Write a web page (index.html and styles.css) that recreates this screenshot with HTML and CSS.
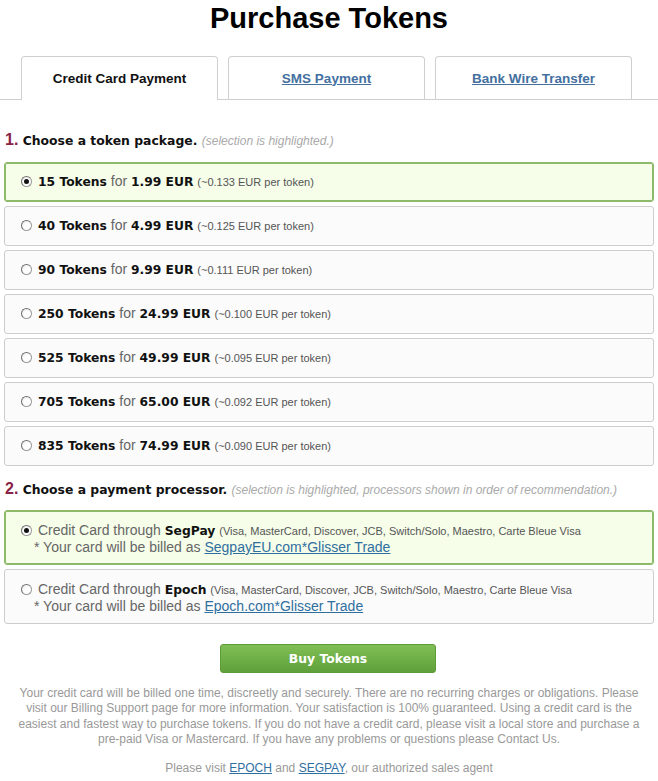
FILE: index.html
```html
<!DOCTYPE html>
<html>
<head>
<meta charset="utf-8">
<title>Purchase Tokens</title>
<link rel="stylesheet" href="styles.css">
</head>
<body>
<h1 class="title">Purchase Tokens</h1>
<div class="tabs">
  <div class="tab active">Credit Card Payment</div>
  <div class="tab"><a href="#">SMS Payment</a></div>
  <div class="tab"><a href="#">Bank Wire Transfer</a></div>
</div>

<div class="content">
  <h2 class="step"><span class="num">1.</span> Choose a token package. <span class="hint">(selection is highlighted.)</span></h2>
  <div class="packages">
    <div class="row selected"><span class="radio on"></span><b>15 Tokens</b> <span class="for">for</span> <b>1.99 EUR</b> <span class="per">(~0.133 EUR per token)</span></div>
    <div class="row"><span class="radio"></span><b>40 Tokens</b> <span class="for">for</span> <b>4.99 EUR</b> <span class="per">(~0.125 EUR per token)</span></div>
    <div class="row"><span class="radio"></span><b>90 Tokens</b> <span class="for">for</span> <b>9.99 EUR</b> <span class="per">(~0.111 EUR per token)</span></div>
    <div class="row"><span class="radio"></span><b>250 Tokens</b> <span class="for">for</span> <b>24.99 EUR</b> <span class="per">(~0.100 EUR per token)</span></div>
    <div class="row"><span class="radio"></span><b>525 Tokens</b> <span class="for">for</span> <b>49.99 EUR</b> <span class="per">(~0.095 EUR per token)</span></div>
    <div class="row"><span class="radio"></span><b>705 Tokens</b> <span class="for">for</span> <b>65.00 EUR</b> <span class="per">(~0.092 EUR per token)</span></div>
    <div class="row"><span class="radio"></span><b>835 Tokens</b> <span class="for">for</span> <b>74.99 EUR</b> <span class="per">(~0.090 EUR per token)</span></div>
  </div>

  <h2 class="step step2"><span class="num">2.</span> Choose a payment processor. <span class="hint">(selection is highlighted, processors shown in order of recommendation.)</span></h2>
  <div class="processors">
    <div class="proc selected">
      <div class="line1"><span class="radio on"></span> Credit Card through <b>SegPay</b> <span class="cards">(Visa, MasterCard, Discover, JCB, Switch/Solo, Maestro, Carte Bleue Visa</span></div>
      <div class="line2">* Your card will be billed as <a href="#">SegpayEU.com*Glisser Trade</a></div>
    </div>
    <div class="proc">
      <div class="line1"><span class="radio"></span> Credit Card through <b>Epoch</b> <span class="cards">(Visa, MasterCard, Discover, JCB, Switch/Solo, Maestro, Carte Bleue Visa</span></div>
      <div class="line2">* Your card will be billed as <a href="#">Epoch.com*Glisser Trade</a></div>
    </div>
  </div>

  <div class="actions"><button class="buy">Buy Tokens</button></div>

  <p class="note">Your credit card will be billed one time, discreetly and securely. There are no recurring charges or obligations. Please<br>visit our Billing Support page for more information. Your satisfaction is 100% guaranteed. Using a credit card is the<br>easiest and fastest way to purchase tokens. If you do not have a credit card, please visit a local store and purchase a<br>pre-paid Visa or Mastercard. If you have any problems or questions please Contact Us.</p>
  <p class="agent">Please visit <a href="#">EPOCH</a> and <a href="#">SEGPAY</a>, our authorized sales agent</p>
</div>
</body>
</html>
```
FILE: styles.css
```css
html, body {
  margin: 0;
  padding: 0;
  background: #fff;
}
body {
  font-family: "Liberation Sans", Arial, sans-serif;
  color: #000;
  width: 658px;
}
.title {
  margin: 0;
  font-size: 29px;
  line-height: 36px;
  font-weight: bold;
  text-align: center;
}
.tabs {
  display: flex;
  gap: 10px;
  margin-top: 20px;
  padding-left: 21px;
  border-bottom: 1px solid #cfcfcf;
  height: 43px;
}
.tab {
  box-sizing: border-box;
  width: 197px;
  height: 43px;
  border: 1px solid #cfcfcf;
  border-bottom: none;
  border-radius: 4px 4px 0 0;
  background: #fff;
  display: flex;
  align-items: center;
  justify-content: center;
  font-size: 13.5px;
  font-weight: bold;
  color: #111;
}
.tab.active {
  width: 197px;
  height: 44px;
  margin-bottom: -1px;
  padding-bottom: 1px;
}
.tab a {
  color: #44709f;
  text-decoration: underline;
}
.content {
  padding: 0 4px;
}
.step {
  margin: 30px 0 11px 1px;
  font-family: "DejaVu Sans", Verdana, sans-serif;
  font-size: 12.4px;
  font-weight: bold;
  line-height: 20px;
  color: #111;
}
.step2 {
  margin-top: 13px;
  margin-bottom: 10px;
}
.num {
  font-family: "Liberation Sans", Arial, sans-serif;
  font-size: 16px;
  color: #8a2146;
}
.hint {
  font-family: "Liberation Sans", Arial, sans-serif;
  font-style: italic;
  font-weight: normal;
  font-size: 12px;
  color: #aaa;
}
.packages, .processors {
  display: flex;
  flex-direction: column;
  gap: 4px;
}
.row, .proc {
  box-sizing: border-box;
  border: 1px solid #cdcdcd;
  border-radius: 3px;
  background: #fbfbfb;
  font-size: 14px;
  color: #666;
  white-space: nowrap;
}
.row {
  height: 40px;
  line-height: 37px;
  padding-left: 16px;
}
.selected {
  border-color: #8db96a;
  box-shadow: inset 0 0 0 1px #8db96a;
  background: #f6fde9;
}
.row b, .proc b {
  font-family: "DejaVu Sans", Verdana, sans-serif;
  font-size: 12.3px;
  color: #111;
}
.per, .cards {
  font-size: 11px;
  color: #555;
}
.radio {
  display: inline-block;
  box-sizing: border-box;
  width: 11px;
  height: 11px;
  border-radius: 50%;
  border: 1px solid #9a9a9a;
  border-top-color: #707070;
  border-left-color: #707070;
  background: radial-gradient(circle at 65% 65%, #fff 40%, #e4e4e4 100%);
  margin-right: 6px;
  vertical-align: -1px;
  position: relative;
}
.radio.on::after {
  content: "";
  position: absolute;
  left: 2px;
  top: 2px;
  width: 5px;
  height: 5px;
  border-radius: 50%;
  background: #111;
}
.proc {
  height: 55px;
  padding: 11px 0 0 16px;
  line-height: 16px;
}
.proc .radio {
  margin-right: 2px;
}
.proc .line2 {
  padding-left: 13px;
}
.proc .line2 a {
  color: #2f6f9f;
  text-decoration: underline;
}
.actions {
  display: flex;
  justify-content: center;
  margin-top: 20px;
  padding-right: 2px;
}
.buy {
  width: 216px;
  height: 29px;
  border: 1px solid #5d9b38;
  border-radius: 3px;
  background: linear-gradient(#80bf55, #5fa03a);
  color: #fff;
  font-family: "DejaVu Sans", Verdana, sans-serif;
  font-weight: bold;
  font-size: 12.4px;
  padding: 0;
}
.note {
  margin: 13px 0 0;
  text-align: center;
  font-size: 12px;
  line-height: 15.3px;
  color: #999;
}
.agent {
  margin: 13px 0 0;
  text-align: center;
  font-size: 12px;
  line-height: 16px;
  color: #999;
}
.agent a {
  color: #2f6f9f;
  text-decoration: underline;
}
```
